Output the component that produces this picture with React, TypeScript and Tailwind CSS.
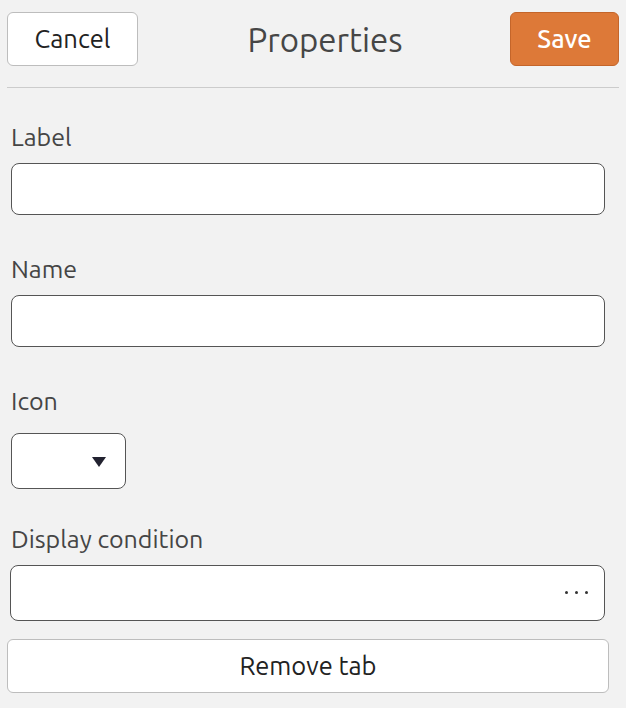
const font = { fontFamily: "Ubuntu, Lato, 'Noto Sans', sans-serif" };

function Label({ text }: { text: string }) {
  return <div className="text-[25px] leading-[30px] text-[#454545]">{text}</div>;
}

export default function App() {
  return (
    <div className="w-[626px] h-[708px] bg-[#f2f2f2] overflow-hidden" style={font}>
      {/* header */}
      <div className="flex items-center justify-between px-[7px] pt-[12px]">
        <button className="w-[131px] h-[54px] rounded-[6px] border border-[#bdbdbd] bg-white text-[25.5px] text-[#222]">
          Cancel
        </button>
        <h1 className="text-[33px] leading-none text-[#464646] ml-[2px]">Properties</h1>
        <button className="w-[109px] h-[54px] rounded-[6px] border border-[#c4652a] bg-[#dd7938] text-[25.5px] font-medium text-white">
          Save
        </button>
      </div>
      <div className="mx-[7px] mt-[21px] h-px bg-[#cccccc]" />

      <div className="pl-[11px] pr-[21px] pt-[34px]">
        <Label text="Label" />
        <div className="mt-[11px] h-[52px] rounded-[8px] border border-[#555] bg-white" />

        <div className="mt-[39px]">
          <Label text="Name" />
        </div>
        <div className="mt-[11px] h-[52px] rounded-[8px] border border-[#555] bg-white" />

        <div className="mt-[39px]">
          <Label text="Icon" />
        </div>
        <div className="relative mt-[17px] w-[115px] h-[56px] rounded-[8px] border border-[#555] bg-white">
          <svg className="absolute left-[80px] top-[23px]" width="14" height="10" viewBox="0 0 14 10">
            <path d="M0 0 H14 L7 10 Z" fill="#222230" />
          </svg>
        </div>
      </div>

      <div className="pl-[10px] pr-[21px] mt-[35px]">
        <div className="pl-[1px]">
          <Label text="Display condition" />
        </div>
        <div className="mt-[11px] flex items-center justify-end gap-[7px] h-[56px] rounded-[8px] border border-[#555] bg-white pr-[16px] pb-[2px]">
          <span className="w-[3px] h-[3px] rounded-full bg-[#333]" />
          <span className="w-[3px] h-[3px] rounded-full bg-[#333]" />
          <span className="w-[3px] h-[3px] rounded-full bg-[#333]" />
        </div>
      </div>

      <div className="pl-[7px] pr-[17px] mt-[18px]">
        <button className="w-full h-[54px] rounded-[6px] border border-[#bdbdbd] bg-white text-[25.5px] text-[#222]">
          Remove tab
        </button>
      </div>
    </div>
  );
}
